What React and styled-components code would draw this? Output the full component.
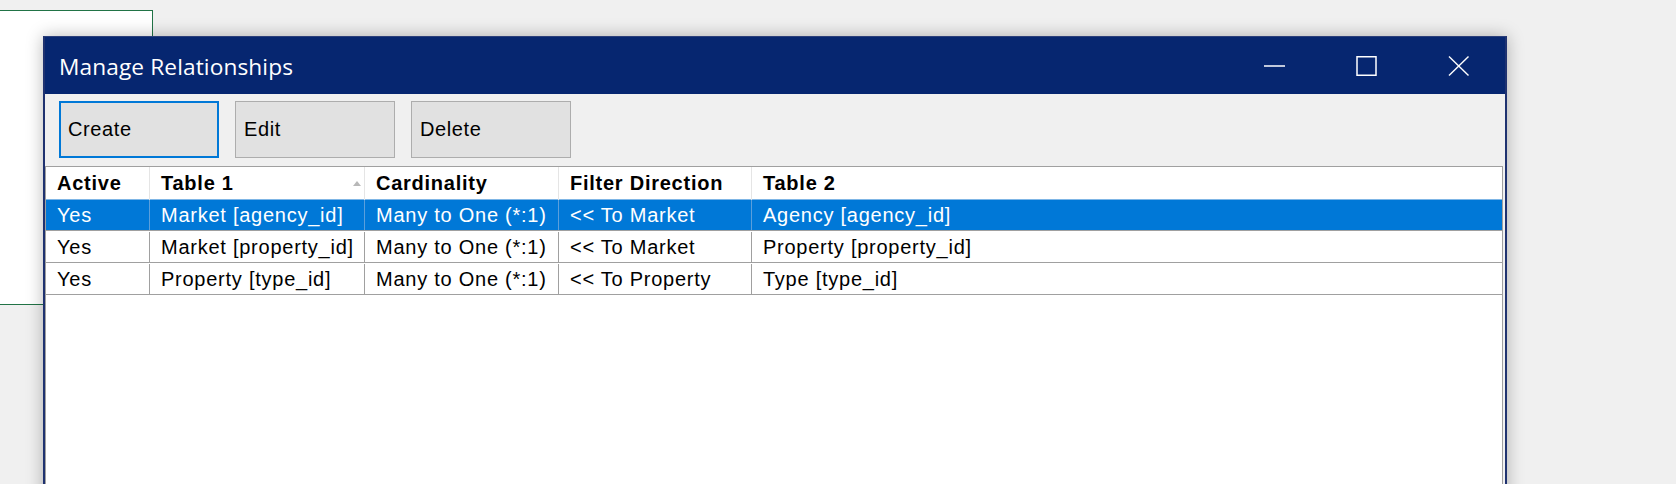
import React from 'react';
import styled, { createGlobalStyle } from 'styled-components';

const GlobalStyle = createGlobalStyle`
    html, body {
        margin: 0;
        padding: 0;
        background: #f0f0f0;
        overflow: hidden;
    }
`;

const Desktop = styled.div`
    position: relative;
    width: 1676px;
    height: 484px;
    overflow: hidden;
    background: #f0f0f0;
`;

// sheet object behind the dialog
const SheetBox = styled.div`
    position: absolute;
    left: -10px;
    top: 10px;
    width: 161px;
    height: 293px;
    background: #ffffff;
    border: 1px solid #217346;
`;

const Window = styled.div`
    position: absolute;
    left: 43px;
    top: 36px;
    width: 1460px;
    height: 470px;
    display: flex;
    flex-direction: column;
    background: #f0f0f0;
    border: 2px solid #1f3270;
    border-top: 1px solid #2b3f7a;
    box-shadow: 0 0 16px rgba(0, 0, 0, 0.28);
`;

const TitleBar = styled.div`
    height: 57px;
    display: flex;
    align-items: center;
    background: #062670;
    color: #ffffff;
`;

const Title = styled.div`
    flex: 1;
    padding-left: 14px;
    padding-top: 2px;
    font-family: "Open Sans", "Noto Sans", sans-serif;
    font-size: 22.7px;
    letter-spacing: 0.1px;
`;

const CaptionButton = styled.div`
    width: 92px;
    height: 57px;
    display: flex;
    align-items: center;
    justify-content: center;
`;

const Toolbar = styled.div`
    display: flex;
    gap: 16px;
    padding: 7px 0 8px 14px;
`;

const Button = styled.div`
    width: 160px;
    height: 57px;
    box-sizing: border-box;
    display: flex;
    align-items: center;
    padding-left: ${props => (props.$focused ? '7px' : '8px')};
    background: #e1e1e1;
    border: ${props => (props.$focused ? '2px solid #0078d7' : '1px solid #adadad')};
    font-family: "Liberation Sans", Arial, sans-serif;
    font-size: 20px;
    letter-spacing: 0.6px;
    color: #000000;
`;

const Grid = styled.div`
    flex: 1;
    margin: 0 2px 0 0;
    background: #ffffff;
    border-top: 1px solid #a0a0a0;
    border-left: 1px solid #a0a0a0;
    border-right: 1px solid #a0a0a0;
    font-family: "Liberation Sans", Arial, sans-serif;
    font-size: 20px;
    letter-spacing: 0.75px;
    color: #000000;
`;

const cols = '104px 215px 194px 193px 1fr';

const HeaderRow = styled.div`
    display: grid;
    grid-template-columns: ${cols};
    height: 33px;
    font-weight: bold;
`;

const HeaderCell = styled.div`
    display: flex;
    align-items: center;
    justify-content: space-between;
    padding-left: 11px;
    border-right: 1px solid #e5e5e5;
    &:last-child {
        border-right: none;
    }
`;

const SortGlyph = styled.span`
    width: 0;
    height: 0;
    margin-right: 3px;
    margin-bottom: 1px;
    border-left: 4.5px solid transparent;
    border-right: 4.5px solid transparent;
    border-bottom: 5px solid #b8b8b8;
`;

const Row = styled.div`
    display: grid;
    grid-template-columns: ${cols};
    height: 30px;
    background: ${props => (props.$selected ? '#0078d7' : '#ffffff')};
    color: ${props => (props.$selected ? '#ffffff' : '#000000')};
    border-top: 1px solid ${props => (props.$selected ? '#7fb6e6' : 'transparent')};
    border-bottom: 1px solid #a0a0a0;
    margin-top: ${props => (props.$selected ? '-1px' : '0')};
`;

const Cell = styled.div`
    display: flex;
    align-items: center;
    padding-left: 11px;
    padding-top: 1px;
    white-space: nowrap;
    border-right: 1px solid ${props => (props.$selected ? '#5a9fdc' : '#a0a0a0')};
    &:last-child {
        border-right: none;
    }
`;

const MinimizeIcon = () => (
    <svg width="22" height="20" viewBox="0 0 22 20">
        <line x1="0" y1="10" x2="21" y2="10" stroke="#ffffff" strokeWidth="1.5" />
    </svg>
);

const MaximizeIcon = () => (
    <svg width="22" height="20" viewBox="0 0 22 20">
        <rect x="1" y="0.75" width="19" height="18.5" fill="none" stroke="#ffffff" strokeWidth="1.5" />
    </svg>
);

const CloseIcon = () => (
    <svg width="22" height="20" viewBox="0 0 22 20">
        <line x1="1" y1="0.5" x2="20.5" y2="19.5" stroke="#ffffff" strokeWidth="1.4" />
        <line x1="20.5" y1="0.5" x2="1" y2="19.5" stroke="#ffffff" strokeWidth="1.4" />
    </svg>
);

const relationships = [
    { active: 'Yes', table1: 'Market [agency_id]', cardinality: 'Many to One (*:1)', direction: '<< To Market', table2: 'Agency [agency_id]' },
    { active: 'Yes', table1: 'Market [property_id]', cardinality: 'Many to One (*:1)', direction: '<< To Market', table2: 'Property [property_id]' },
    { active: 'Yes', table1: 'Property [type_id]', cardinality: 'Many to One (*:1)', direction: '<< To Property', table2: 'Type [type_id]' },
];

function App() {
    return (
        <Desktop>
            <GlobalStyle />
            <SheetBox />
            <Window>
                <TitleBar>
                    <Title>Manage Relationships</Title>
                    <CaptionButton><MinimizeIcon /></CaptionButton>
                    <CaptionButton><MaximizeIcon /></CaptionButton>
                    <CaptionButton><CloseIcon /></CaptionButton>
                </TitleBar>
                <Toolbar>
                    <Button $focused>Create</Button>
                    <Button>Edit</Button>
                    <Button>Delete</Button>
                </Toolbar>
                <Grid>
                    <HeaderRow>
                        <HeaderCell>Active</HeaderCell>
                        <HeaderCell>Table 1<SortGlyph /></HeaderCell>
                        <HeaderCell>Cardinality</HeaderCell>
                        <HeaderCell>Filter Direction</HeaderCell>
                        <HeaderCell>Table 2</HeaderCell>
                    </HeaderRow>
                    {relationships.map((r, i) => {
                        const sel = i === 0;
                        return (
                            <Row key={i} $selected={sel}>
                                <Cell $selected={sel}>{r.active}</Cell>
                                <Cell $selected={sel}>{r.table1}</Cell>
                                <Cell $selected={sel}>{r.cardinality}</Cell>
                                <Cell $selected={sel}>{r.direction}</Cell>
                                <Cell $selected={sel}>{r.table2}</Cell>
                            </Row>
                        );
                    })}
                </Grid>
            </Window>
        </Desktop>
    );
}

export default App;
